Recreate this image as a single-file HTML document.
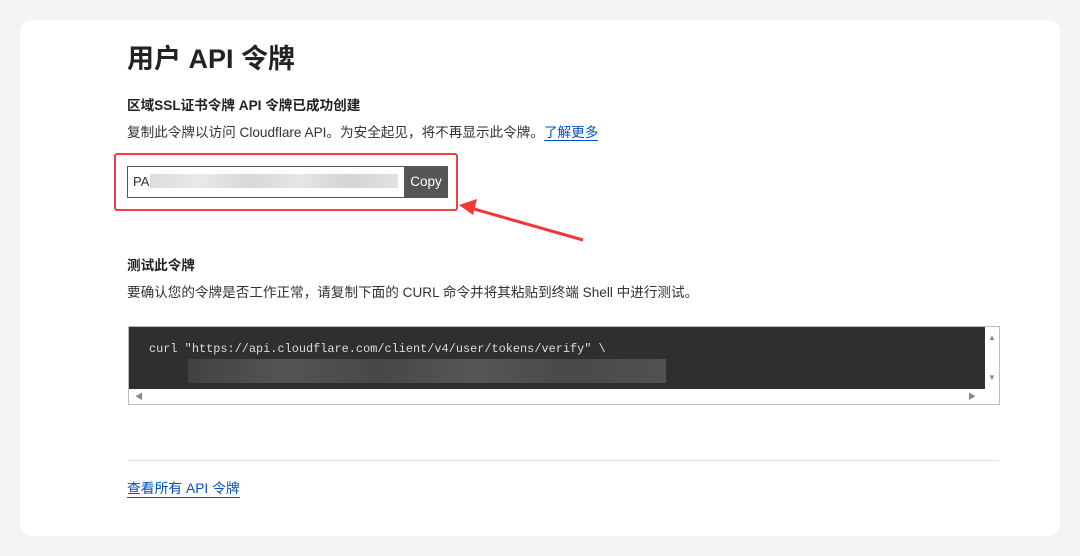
<!DOCTYPE html><html><head><meta charset="utf-8"><style>
body{margin:0;width:1080px;height:556px;background:#f3f3f3;font-family:"Liberation Sans","Noto Sans CJK SC",sans-serif;color:#222;position:relative;overflow:hidden}
.card{position:absolute;left:20px;top:20px;width:1040px;height:516px;background:#fff;border-radius:12px}
.a{position:absolute;white-space:nowrap}
</style></head><body><div class="card"></div>
<div class="a" style="left:127px;top:37px;font-size:27px;font-weight:bold;color:#222">用户 API 令牌</div>
<div class="a" style="left:127px;top:94px;font-size:13.6px;font-weight:bold">区域SSL证书令牌 API 令牌已成功创建</div>
<div class="a" style="left:127px;top:121px;font-size:13.6px;color:#333">复制此令牌以访问 Cloudflare API。为安全起见，将不再显示此令牌。<span style="color:#0051c3;border-bottom:1px solid #0051c3">了解更多</span></div>
<div class="a" style="left:114px;top:153px;width:340px;height:54px;border:2px solid #f04040;border-radius:3px"></div>
<div class="a" style="left:127px;top:166px;width:276px;height:30px;border:1px solid #555;border-right:none;background:#fff"></div>
<div class="a" style="left:133px;top:174px;font-size:13px;color:#333">PA</div>
<div class="a" style="left:150px;top:174px;width:248px;height:14px;background:linear-gradient(90deg,#ddd,#e9e9e9 20%,#d8d8d8 40%,#e6e6e6 60%,#d4d4d4 80%,#e2e2e2)"></div>
<div class="a" style="left:404px;top:166px;width:44px;height:32px;background:#555;color:#fff;font-size:13.5px;line-height:32px;text-align:center">Copy</div>
<svg class="a" style="left:455px;top:195px" width="135" height="50"><line x1="128" y1="45" x2="12" y2="12" stroke="#f03838" stroke-width="3"/><polygon points="4,10 22,4 18,20" fill="#f03838"/></svg>
<div class="a" style="left:127px;top:254px;font-size:13.6px;font-weight:bold">测试此令牌</div>
<div class="a" style="left:127px;top:281px;font-size:13.6px;color:#333">要确认您的令牌是否工作正常，请复制下面的 CURL 命令并将其粘贴到终端 Shell 中进行测试。</div>
<div class="a" style="left:128px;top:326px;width:870px;height:77px;border:1px solid #bbb;background:#fff"></div>
<div class="a" style="left:129px;top:327px;width:856px;height:62px;background:#2f2f2f"></div>
<div class="a" style="left:149px;top:342px;font-size:11.9px;color:#ddd;font-family:'Liberation Mono',monospace">curl "https://api.cloudflare.com/client/v4/user/tokens/verify" \</div>
<div class="a" style="left:188px;top:359px;width:478px;height:24px;background:linear-gradient(90deg,#444,#585858 20%,#4a4a4a 40%,#5a5a5a 60%,#4c4c4c 80%,#555);opacity:.9"></div>
<div class="a" style="left:988px;top:333px;font-size:8px;color:#888">▲</div>
<div class="a" style="left:988px;top:373px;font-size:8px;color:#888">▼</div>
<div class="a" style="left:135px;top:391px;font-size:8px;color:#888">◀</div>
<div class="a" style="left:968px;top:391px;font-size:8px;color:#888">▶</div>
<div class="a" style="left:128px;top:460px;width:871px;height:1px;background:#ddd"></div>
<div class="a" style="left:127px;top:477px;font-size:13.8px;color:#0051c3;border-bottom:1px solid #0051c3">查看所有 API 令牌</div>
</body></html>
